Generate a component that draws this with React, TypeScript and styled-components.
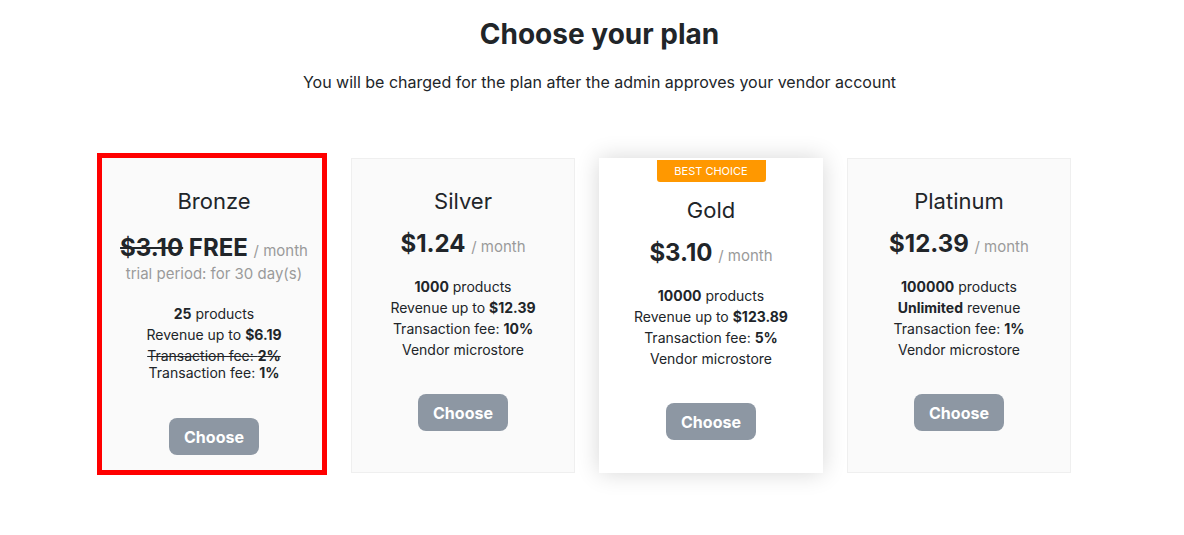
import styled, { createGlobalStyle } from 'styled-components';

const GlobalStyle = createGlobalStyle`
  body {
    margin: 0;
    background-color: white;
    font-family: Inter, 'Liberation Sans', sans-serif;
    color: #212529;
  }
`;

const Page = styled.div`
  width: 1184px;
  height: 535px;
  overflow: hidden;
`;

const Header = styled.div`
  padding: 17px 0 0 15px;
  text-align: center;
`;

const Title = styled.h1`
  margin: 0;
  font-size: 28px;
  line-height: 34px;
  font-weight: 700;
`;

const Subtitle = styled.p`
  margin: 19px 0 0;
  font-size: 16px;
  line-height: 24px;
`;

const Row = styled.div`
  display: flex;
  align-items: flex-start;
  gap: 24px;
  margin-top: 59px;
  padding-left: 97px;
`;

const Card = styled.div<{ $selected?: boolean; $featured?: boolean }>`
  box-sizing: border-box;
  width: ${(p) => (p.$selected ? '230px' : '224px')};
  height: ${(p) => (p.$selected ? '322px' : '315px')};
  margin-top: ${(p) => (p.$selected ? '0' : '5px')};
  display: flex;
  flex-direction: column;
  align-items: center;
  text-align: center;
  background-color: ${(p) => (p.$featured ? 'white' : '#fafafa')};
  border: ${(p) =>
    p.$selected ? '5px solid #ff0000' : p.$featured ? '1px solid white' : '1px solid #efefef'};
  box-shadow: ${(p) => (p.$featured ? '0 0 22px rgba(0, 0, 0, 0.16)' : 'none')};
  padding-top: ${(p) => (p.$featured ? '1px' : p.$selected ? '30px' : '29px')};
  padding-left: ${(p) => (p.$selected ? '4px' : '0')};
`;

const Badge = styled.div`
  width: 109px;
  height: 22px;
  line-height: 22px;
  background-color: #ff9800;
  color: white;
  font-size: 11px;
  text-transform: uppercase;
  border-radius: 0 0 3px 3px;
  margin-bottom: 15px;
`;

const PlanName = styled.div`
  font-size: 22px;
  line-height: 26px;
  font-weight: 400;
`;

const Price = styled.div<{ $gap: number }>`
  margin-top: ${(p) => p.$gap}px;
  font-size: 24px;
  line-height: 29px;
  font-weight: 700;
`;

const Period = styled.span`
  font-size: 15px;
  font-weight: 400;
  color: #9a9a9a;
`;

const Trial = styled.div`
  font-size: 15px;
  line-height: 18px;
  color: #9a9a9a;
`;

const Features = styled.div<{ $gap: number }>`
  margin-top: ${(p) => p.$gap}px;
  font-size: 14px;
`;

const Feature = styled.div<{ $tight?: boolean; $struck?: boolean }>`
  line-height: ${(p) => (p.$tight ? '13px' : '21px')};
  text-decoration: ${(p) => (p.$struck ? 'line-through' : 'none')};
`;

const ChooseButton = styled.button<{ $gap: number }>`
  margin-top: ${(p) => p.$gap}px;
  width: 90px;
  height: 37px;
  border: none;
  border-radius: 8px;
  background-color: #8d97a3;
  color: white;
  font-family: Inter, 'Liberation Sans', sans-serif;
  font-size: 16px;
  font-weight: 700;
  cursor: pointer;
`;

const App = () => {
  return (
    <Page>
      <GlobalStyle />
      <Header>
        <Title>Choose your plan</Title>
        <Subtitle>You will be charged for the plan after the admin approves your vendor account</Subtitle>
      </Header>
      <Row>
        <Card $selected>
          <PlanName>Bronze</PlanName>
          <Price $gap={19}>
            <s>$3.10</s> FREE <Period>/ month</Period>
          </Price>
          <Trial>trial period: for 30 day(s)</Trial>
          <Features $gap={20}>
            <Feature>
              <b>25</b> products
            </Feature>
            <Feature>
              Revenue up to <b>$6.19</b>
            </Feature>
            <Feature $struck>
              Transaction fee: <b>2%</b>
            </Feature>
            <Feature $tight>
              Transaction fee: <b>1%</b>
            </Feature>
          </Features>
          <ChooseButton $gap={39}>Choose</ChooseButton>
        </Card>

        <Card>
          <PlanName>Silver</PlanName>
          <Price $gap={15}>
            $1.24 <Period>/ month</Period>
          </Price>
          <Features $gap={15}>
            <Feature>
              <b>1000</b> products
            </Feature>
            <Feature>
              Revenue up to <b>$12.39</b>
            </Feature>
            <Feature>
              Transaction fee: <b>10%</b>
            </Feature>
            <Feature>Vendor microstore</Feature>
          </Features>
          <ChooseButton $gap={34}>Choose</ChooseButton>
        </Card>

        <Card $featured>
          <Badge>Best choice</Badge>
          <PlanName>Gold</PlanName>
          <Price $gap={15}>
            $3.10 <Period>/ month</Period>
          </Price>
          <Features $gap={15}>
            <Feature>
              <b>10000</b> products
            </Feature>
            <Feature>
              Revenue up to <b>$123.89</b>
            </Feature>
            <Feature>
              Transaction fee: <b>5%</b>
            </Feature>
            <Feature>Vendor microstore</Feature>
          </Features>
          <ChooseButton $gap={34}>Choose</ChooseButton>
        </Card>

        <Card>
          <PlanName>Platinum</PlanName>
          <Price $gap={15}>
            $12.39 <Period>/ month</Period>
          </Price>
          <Features $gap={15}>
            <Feature>
              <b>100000</b> products
            </Feature>
            <Feature>
              <b>Unlimited</b> revenue
            </Feature>
            <Feature>
              Transaction fee: <b>1%</b>
            </Feature>
            <Feature>Vendor microstore</Feature>
          </Features>
          <ChooseButton $gap={34}>Choose</ChooseButton>
        </Card>
      </Row>
    </Page>
  );
};

export default App;
